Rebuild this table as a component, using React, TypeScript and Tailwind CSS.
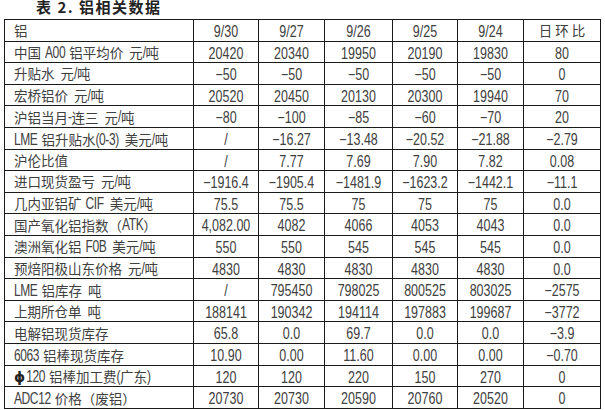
import React from "react";

const header = ["铝", "9/30", "9/27", "9/26", "9/25", "9/24", "日环比"];

const rows: string[][] = [
  ["中国 A00 铝平均价|元/吨", "20420", "20340", "19950", "20190", "19830", "80"],
  ["升贴水|元/吨", "−50", "−50", "−50", "−50", "−50", "0"],
  ["宏桥铝价|元/吨", "20520", "20450", "20130", "20300", "19940", "70"],
  ["沪铝当月-连三|元/吨", "−80", "−100", "−85", "−60", "−70", "20"],
  ["LME 铝升贴水(0-3)|美元/吨", "/", "−16.27", "−13.48", "−20.52", "−21.88", "−2.79"],
  ["沪伦比值", "/", "7.77", "7.69", "7.90", "7.82", "0.08"],
  ["进口现货盈亏|元/吨", "−1916.4", "−1905.4", "−1481.9", "−1623.2", "−1442.1", "−11.1"],
  ["几内亚铝矿 CIF|美元/吨", "75.5", "75.5", "75", "75", "75", "0.0"],
  ["国产氧化铝指数（ATK）", "4,082.00", "4082", "4066", "4053", "4043", "0.0"],
  ["澳洲氧化铝 F0B|美元/吨", "550", "550", "545", "545", "545", "0.0"],
  ["预焙阳极山东价格|元/吨", "4830", "4830", "4830", "4830", "4830", "0.0"],
  ["LME 铝库存|吨", "/", "795450", "798025", "800525", "803025", "−2575"],
  ["上期所仓单|吨", "188141", "190342", "194114", "197883", "199687", "−3772"],
  ["电解铝现货库存", "65.8", "0.0", "69.7", "0.0", "0.0", "−3.9"],
  ["6063 铝棒现货库存", "10.90", "0.00", "11.60", "0.00", "0.00", "−0.70"],
  ["ϕ120 铝棒加工费(广东)", "120", "120", "220", "150", "270", "0"],
  ["ADC12 价格（废铝）", "20730", "20730", "20590", "20760", "20520", "0"],
];

const cjk = /[\u3000-\u9fff\uff00-\uffef]/;

type Kind = "cjk" | "lat" | "phi" | "sp" | "gap";

function Label({ text }: { text: string }) {
  const parts: { t: string; kind: Kind }[] = [];
  for (const ch of text) {
    const kind: Kind =
      ch === " " ? "sp" : ch === "|" ? "gap" : ch === "ϕ" ? "phi" : cjk.test(ch) ? "cjk" : "lat";
    const last = parts[parts.length - 1];
    if (last && last.kind === kind && (kind === "cjk" || kind === "lat")) last.t += ch;
    else parts.push({ t: ch, kind });
  }
  return (
    <span className="inline-flex items-center whitespace-nowrap">
      {parts.map((p, i) =>
        p.kind === "sp" ? (
          <span key={i} className="inline-block w-[4px]" />
        ) : p.kind === "gap" ? (
          <span key={i} className="inline-block w-[6px]" />
        ) : p.kind === "cjk" ? (
          <span key={i} className="text-[13.5px] font-['Noto_Sans_CJK_SC',sans-serif]">
            {p.t}
          </span>
        ) : p.kind === "phi" ? (
          <span key={i} className="inline-block text-[14px] font-bold mr-[1px] text-[#222] font-['DejaVu_Sans',sans-serif]">
            {p.t}
          </span>
        ) : (
          <span
            key={i}
            className="inline-block text-[12px] scale-y-[1.3] tracking-[-0.4px] font-['Liberation_Sans',sans-serif]"
          >
            {p.t}
          </span>
        )
      )}
    </span>
  );
}

function Num({ v, head }: { v: string; head?: boolean }) {
  if (cjk.test(v)) {
    return (
      <span
        className={
          "text-[13.5px] font-['Noto_Sans_CJK_SC',sans-serif]" + (head && v.length > 1 ? " tracking-[3px] pl-[3px]" : "")
        }
      >
        {v}
      </span>
    );
  }
  return (
    <span className="inline-block text-[12.5px] scale-y-[1.25] font-['Liberation_Sans',sans-serif]">{v}</span>
  );
}

export default function App() {
  const widths = ["w-[189px]", "w-[65px]", "w-[66px]", "w-[68px]", "w-[65px]", "w-[66px]", "w-[77px]"];
  return (
    <div className="w-[605px] h-[410px] bg-white overflow-hidden text-[#404040]">
      <div className="h-[19px] pl-[36px] -mt-[3px] leading-[19px] text-[15px] font-bold tracking-[1.5px] text-[#222] font-['Noto_Sans_CJK_SC',sans-serif]">
        表 2. 铝相关数据
      </div>
      <div className="pl-[4px]">
        <table className="border-collapse table-fixed w-[597px] mt-[3px]">
          <colgroup>
            {widths.map((w, i) => (
              <col key={i} className={w} />
            ))}
          </colgroup>
          <tbody>
            <tr className="h-[21.6px]">
              {header.map((h, i) => (
                <td
                  key={i}
                  className={"border border-[#1a1a1a] p-0 leading-none " + (i === 0 ? "text-left pl-[9px]" : "text-center")}
                >
                  <Num v={h} head />
                </td>
              ))}
            </tr>
            {rows.map((r, ri) => (
              <tr key={ri} className="h-[21.6px]">
                {r.map((c, ci) => (
                  <td
                    key={ci}
                    className={"border border-[#1a1a1a] p-0 leading-none " + (ci === 0 ? "text-left pl-[9px]" : "text-center")}
                  >
                    {ci === 0 ? <Label text={c} /> : <Num v={c} />}
                  </td>
                ))}
              </tr>
            ))}
          </tbody>
        </table>
      </div>
    </div>
  );
}
